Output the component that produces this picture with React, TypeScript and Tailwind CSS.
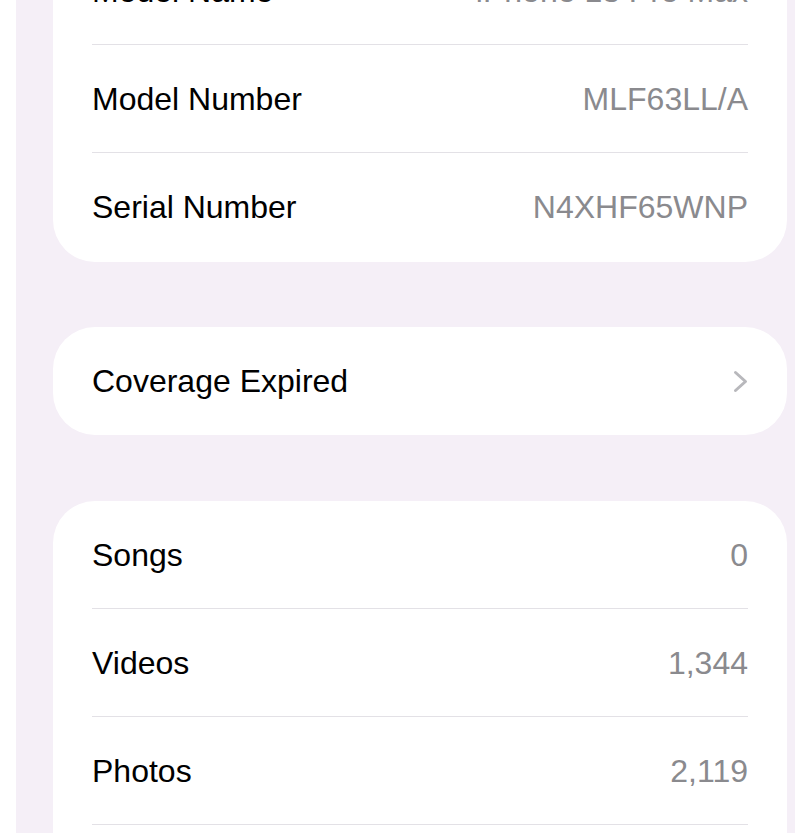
import React from 'react';

interface RowProps {
  label: string;
  value?: string;
  chevron?: boolean;
  last?: boolean;
  tall?: boolean;
}

const Chevron = () => (
  <svg width="15" height="23" viewBox="0 0 15 23" fill="none" className="shrink-0">
    <path d="M2.5 2.5 L12.5 11.5 L2.5 20.5" stroke="#b8b8bc" strokeWidth="3" strokeLinecap="round" strokeLinejoin="round" />
  </svg>
);

const Row: React.FC<RowProps> = ({ label, value, chevron, last, tall }) => (
  <>
    <div className={`flex items-center justify-between px-[39px] ${tall ? 'h-[108px]' : 'h-[107px]'}`}>
      <span className="text-[32px] leading-none text-black">{label}</span>
      {value !== undefined && <span className="text-[32px] leading-none text-[#8a8a8e]">{value}</span>}
      {chevron && <Chevron />}
    </div>
    {!last && <div className="mx-[39px] h-px bg-[#e3e1e6]" />}
  </>
);

const Card: React.FC<{ children: React.ReactNode; className?: string }> = ({ children, className = '' }) => (
  <div className={`shrink-0 overflow-hidden rounded-[42px] bg-white ${className}`}>{children}</div>
);

export default function App() {
  return (
    <div className="h-[833px] overflow-hidden bg-white pl-4 font-['Liberation_Sans',Arial,sans-serif]">
      <div className="flex h-full flex-col bg-[#f5eff7] pl-[37px] pr-[8px]">
        {/* Device info */}
        <Card className="-mt-[63px] pb-[2px]">
          <Row label="Model Name" value="iPhone 13 Pro Max" />
          <Row label="Model Number" value="MLF63LL/A" />
          <Row label="Serial Number" value="N4XHF65WNP" last />
        </Card>

        {/* Coverage */}
        <Card className="mt-[65px]">
          <Row label="Coverage Expired" chevron last tall />
        </Card>

        {/* Media counts */}
        <Card className="mt-[66px] pb-[60px]">
          <Row label="Songs" value="0" />
          <Row label="Videos" value="1,344" />
          <Row label="Photos" value="2,119" />
        </Card>
      </div>
    </div>
  );
}
